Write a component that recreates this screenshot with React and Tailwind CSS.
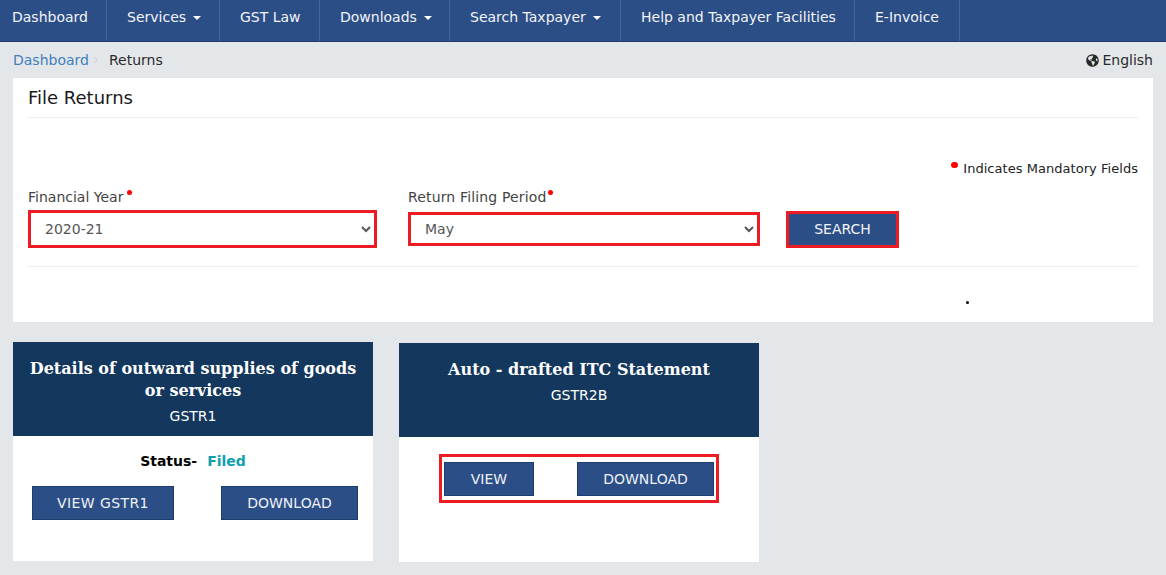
import React from 'react';
import { FaGlobeAmericas } from 'react-icons/fa';
import { ChevronRight } from 'lucide-react';

const navItems = [
  { label: 'Dashboard', cls: 'w-[107px] pl-3' },
  { label: 'Services', cls: 'w-[113px] pl-5', caret: true },
  { label: 'GST Law', cls: 'w-[100px] pl-5' },
  { label: 'Downloads', cls: 'w-[130px] pl-5', caret: true },
  { label: 'Search Taxpayer', cls: 'w-[171px] pl-5', caret: true },
  { label: 'Help and Taxpayer Facilities', cls: 'w-[234px] pl-5' },
  { label: 'E-Invoice', cls: 'w-[105px] pl-5' },
];

function Dot({ className }) {
  return <span className={`inline-block rounded-full bg-[#f00] ${className}`} />;
}

function ActionButton({ children, className }) {
  return (
    <button className={`h-[34px] bg-[#2c4e86] border border-[#1f3c6e] text-[#eef1f6] text-[14px] ${className}`}>
      {children}
    </button>
  );
}

function CardHeader({ title, code }) {
  return (
    <div className="h-[94px] bg-[#14375d] px-3 pt-[16px] text-center text-white">
      <h3 className="font-['DejaVu_Serif',serif] font-bold text-[16px] leading-[22px]">{title}</h3>
      <p className="text-[14px] leading-[20px] mt-[4px]">{code}</p>
    </div>
  );
}

export default function App() {
  return (
    <div className="min-h-[575px] bg-[#e4e7ea] font-['DejaVu_Sans',sans-serif] text-[14px] overflow-hidden">
      {/* Top nav */}
      <nav className="h-[42px] bg-[#2c4e86] border-b border-[#1d3a6b] flex">
        {navItems.map((item) => (
          <div key={item.label} className={`${item.cls} h-full border-r border-[#44659a] flex items-center gap-[7px] text-[#f2f4f8] pb-[7px]`}>
            {item.label}
            {item.caret && <span className="w-0 h-0 border-x-4 border-t-4 border-x-transparent border-t-white mt-[2px]" />}
          </div>
        ))}
      </nav>

      {/* Breadcrumb */}
      <div className="h-[36px] pl-[13px] pr-[13px] flex items-center">
        <span className="text-[#3f7fbf]">Dashboard</span>
        <ChevronRight size={10} className="text-[#c4c8cc] ml-[2px] mr-[8px]" />
        <span className="text-[#2a2a2a]">Returns</span>
        <span className="ml-auto flex items-center gap-[3px] text-[#2a2a2a]">
          <FaGlobeAmericas size={13} />
          English
        </span>
      </div>

      <div className="px-[13px]">
        {/* File returns panel */}
        <section className="w-[1140px] h-[244px] bg-white px-[15px]">
          <h2 className="h-[40px] pt-[8px] text-[18px] leading-[24px] text-[#1a1a1a] border-b border-[#ebeced]">File Returns</h2>
          <div className="h-[41px] mt-[2px]" />
          <div className="h-[14px] flex justify-end items-start text-[13px] leading-[18px] text-[#222] tracking-[0.04px]">
            <Dot className="w-[7px] h-[6px] mr-[5px] mt-[1px]" />
            <span className="mt-[-1px]">Indicates Mandatory Fields</span>
          </div>
          <div className="flex mt-[12px] h-[58px] items-start text-[#555]">
            <div className="w-[349px]">
              <label className="h-[20px] flex items-start leading-[20px] text-[#444]">
                Financial Year<Dot className="w-[5px] h-[5px] ml-[4px] mt-[3px]" />
              </label>
              <select className="mt-[3px] w-full h-[38px] border-[3px] border-[#ed1c24] pl-[10px] text-[14px] text-[#555] bg-white outline-none">
                <option>2020-21</option>
              </select>
            </div>
            <div className="w-[352px] ml-[31px]">
              <label className="h-[20px] flex items-start leading-[20px] text-[#444] tracking-[0.15px]">
                Return Filing Period<Dot className="w-[5px] h-[5px] ml-[2px] mt-[3px]" />
              </label>
              <select className="mt-[5px] w-full h-[34px] border-[3px] border-[#ed1c24] pl-[10px] text-[14px] text-[#555] bg-white outline-none">
                <option>May</option>
              </select>
            </div>
            <button className="ml-[26px] mt-[24px] w-[113px] h-[37px] border-[3px] border-[#ed1c24] bg-[#2c4e86] text-[#f2f4f8] text-[14px]">
              SEARCH
            </button>
          </div>
          <div className="mt-[21px] border-t border-[#ebeced] flex justify-end">
            <span className="w-[3px] h-[3px] mt-[34px] mr-[169px] rounded-full bg-black" />
          </div>
        </section>

        {/* Return cards */}
        <div className="flex items-start gap-[26px] mt-[20px]">
          <article className="w-[360px] h-[219px] bg-white">
            <CardHeader title="Details of outward supplies of goods or services" code="GSTR1" />
            <div className="text-center font-bold leading-[20px] mt-[15px] text-black">
              Status-<span className="text-[#0f9fb0] ml-[10px]">Filed</span>
            </div>
            <div className="flex justify-between pl-[19px] pr-[15px] mt-[15px]">
              <ActionButton className="w-[142px] tracking-[0.4px]">VIEW GSTR1</ActionButton>
              <ActionButton className="w-[137px]">DOWNLOAD</ActionButton>
            </div>
          </article>

          <article className="w-[360px] h-[219px] bg-white mt-px">
            <CardHeader title="Auto - drafted ITC Statement" code="GSTR2B" />
            <div className="ml-[40px] mt-[17px] w-[280px] h-[49px] border-[3px] border-[#ed1c24] flex justify-between items-start pt-[5px] px-[2px]">
              <ActionButton className="w-[90px]">VIEW</ActionButton>
              <ActionButton className="w-[137px]">DOWNLOAD</ActionButton>
            </div>
          </article>
        </div>
      </div>
    </div>
  );
}
